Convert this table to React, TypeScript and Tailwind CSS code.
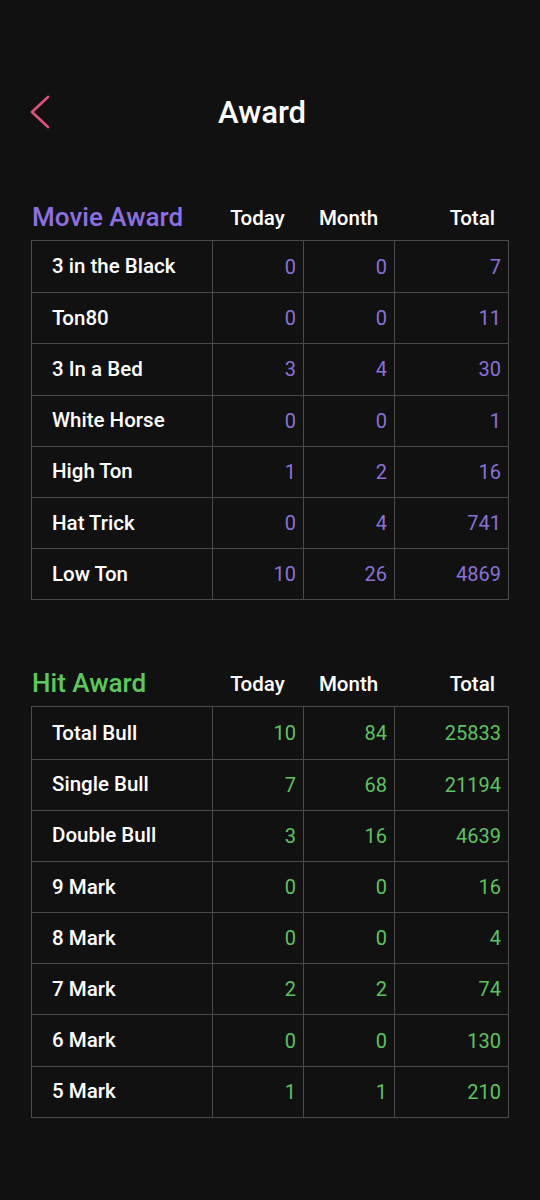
const movieRows: [string, number, number, number][] = [
  ["3 in the Black", 0, 0, 7],
  ["Ton80", 0, 0, 11],
  ["3 In a Bed", 3, 4, 30],
  ["White Horse", 0, 0, 1],
  ["High Ton", 1, 2, 16],
  ["Hat Trick", 0, 4, 741],
  ["Low Ton", 10, 26, 4869],
];

const hitRows: [string, number, number, number][] = [
  ["Total Bull", 10, 84, 25833],
  ["Single Bull", 7, 68, 21194],
  ["Double Bull", 3, 16, 4639],
  ["9 Mark", 0, 0, 16],
  ["8 Mark", 0, 0, 4],
  ["7 Mark", 2, 2, 74],
  ["6 Mark", 0, 0, 130],
  ["5 Mark", 1, 1, 210],
];

const medium = "font-['Roboto_Medium',Roboto,sans-serif]";

function AwardTable({
  title,
  rows,
  titleClass,
  numClass,
}: {
  title: string;
  rows: [string, number, number, number][];
  titleClass: string;
  numClass: string;
}) {
  return (
    <div className="flex flex-col w-[478px]">
      <div className="grid grid-cols-[181px_91px_91px_115px] items-end h-[40px]">
        <div className={`text-[26px] leading-none pl-[1px] ${medium} ${titleClass}`}>
          {title}
        </div>
        <div className={`text-[20.5px] text-white text-center leading-none pb-[2px] ${medium}`}>
          Today
        </div>
        <div className={`text-[20.5px] text-white text-center leading-none pb-[2px] ${medium}`}>
          Month
        </div>
        <div className={`text-[20.5px] text-white text-right pr-[14px] leading-none pb-[2px] ${medium}`}>
          Total
        </div>
      </div>
      <div className="mt-[10px] border border-[#4a4a4a]">
        {rows.map((r, i) => (
          <div
            key={r[0]}
            className={`grid grid-cols-[180px_91px_91px_114px] h-[51.2px] ${
              i > 0 ? "border-t border-[#4a4a4a]" : ""
            }`}
          >
            <div className={`flex items-center pl-[20px] text-[20.5px] text-white ${medium}`}>
              {r[0]}
            </div>
            <div className={`flex items-center justify-end pr-[7px] text-[20px] border-l border-[#4a4a4a] ${numClass}`}>
              {r[1]}
            </div>
            <div className={`flex items-center justify-end pr-[7px] text-[20px] border-l border-[#4a4a4a] ${numClass}`}>
              {r[2]}
            </div>
            <div className={`flex items-center justify-end pr-[7px] text-[20px] border-l border-[#4a4a4a] ${numClass}`}>
              {r[3]}
            </div>
          </div>
        ))}
      </div>
    </div>
  );
}

export default function App() {
  return (
    <div
      className="w-[540px] min-h-[1200px] bg-[#111111] flex flex-col"
      style={{ fontFamily: "Roboto, 'Noto Sans', sans-serif" }}
    >
      <div className="flex items-center h-[60px] mt-[82px] pl-[30px]">
        <svg width="22" height="34" viewBox="0 0 22 34" fill="none">
          <path
            d="M18 2 L2 17 L18 32"
            stroke="#e0527c"
            strokeWidth="2.6"
            strokeLinecap="round"
            strokeLinejoin="round"
          />
        </svg>
        <div className={`ml-[166px] text-[31px] text-white leading-none ${medium}`}>
          Award
        </div>
      </div>

      <div className="pl-[31px] mt-[48px]">
        <AwardTable
          title="Movie Award"
          rows={movieRows}
          titleClass="text-[#8d6fe3]"
          numClass="text-[#8a72d8]"
        />
      </div>

      <div className="pl-[31px] mt-[56px]">
        <AwardTable
          title="Hit Award"
          rows={hitRows}
          titleClass="text-[#5cc85c]"
          numClass="text-[#5ec25e]"
        />
      </div>
    </div>
  );
}
